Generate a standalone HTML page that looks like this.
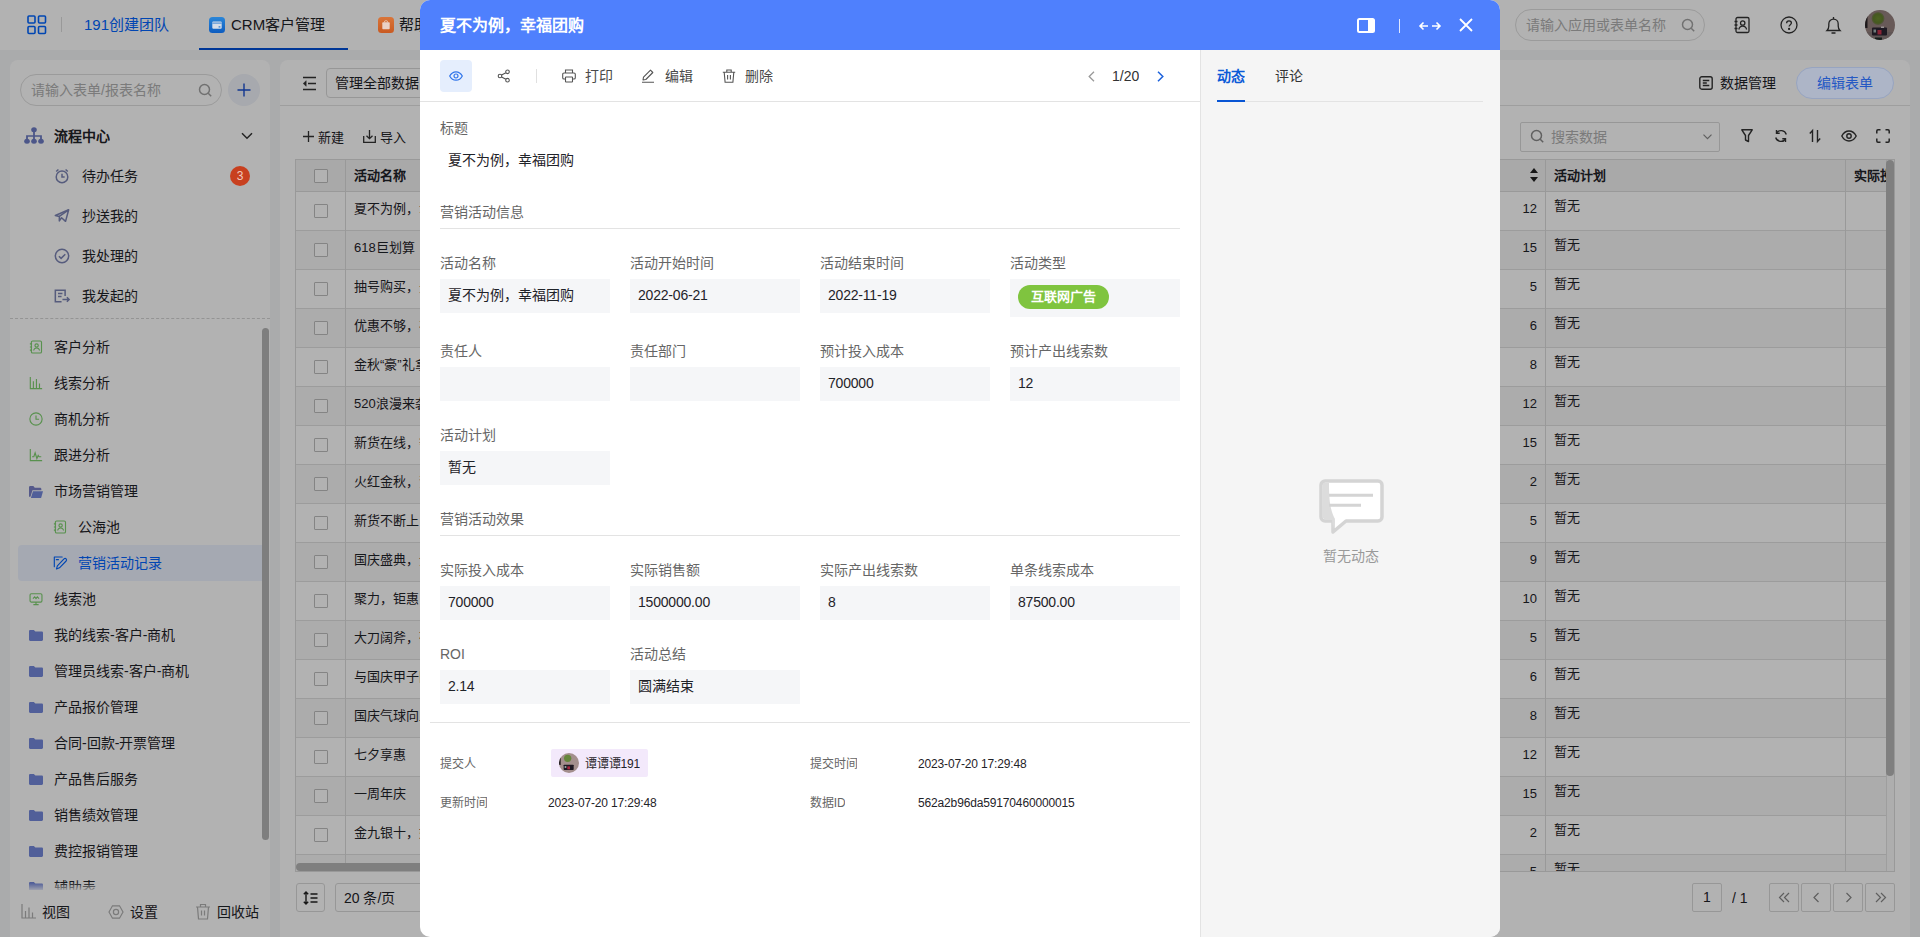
<!DOCTYPE html>
<html lang="zh-CN">
<head>
<meta charset="utf-8">
<title>CRM客户管理</title>
<style>
*{box-sizing:border-box;margin:0;padding:0}
html,body{width:1920px;height:937px;overflow:hidden;background:#f4f5f7}
body{font-family:"Liberation Sans",sans-serif;font-size:14px;color:#1f2329;position:relative;font-weight:300}
.a{position:absolute}
.t{position:absolute;white-space:nowrap;line-height:20px;font-size:14px;overflow:hidden}
svg{position:absolute;overflow:visible}
.b{font-weight:bold}
/* ---------- base page ---------- */
#top{left:0;top:0;width:1920px;height:50px;background:#fff}
#side{left:10px;top:60px;width:260px;height:900px;background:#fff;border-radius:8px}
#main{left:280px;top:60px;width:1630px;height:900px;background:#fff;border-radius:8px}
#mask{left:0;top:0;width:1920px;height:937px;background:rgba(0,0,0,.3)}
.nav{left:54px;color:#1f2329}
.nav2{left:82px;color:#1f2329}
/* table */
.row{position:absolute;left:296px;width:1598px;height:39px;border-bottom:1px solid #e0e0e0;background:#fff}
.row.e{background:#f7f7f7}
.cb{position:absolute;left:18px;top:12px;width:14px;height:14px;border:1px solid #bdbdbd;border-radius:1px;background:#fff}
.c1{position:absolute;left:58px;top:7px;line-height:20px;white-space:nowrap}
.cn{position:absolute;left:1180px;width:61px;top:7px;line-height:20px;text-align:right}
.cp{position:absolute;left:1258px;top:4px;line-height:20px;white-space:nowrap}
.vl{position:absolute;top:0;width:1px;height:39px;background:#dcdcdc}
/* ---------- modal ---------- */
#modal{left:420px;top:0;width:1080px;height:937px;background:#fff;border-radius:10px;overflow:hidden}
#mh{left:0;top:0;width:1080px;height:50px;background:#4f80fd}
#mr{left:780px;top:50px;width:300px;height:887px;background:#f5f5f5;border-left:1px solid #e3e3e3}
.fd{position:absolute;width:170px;height:34px;background:#f5f6f8;line-height:33px;padding-left:8px;white-space:nowrap;overflow:hidden;color:#1f2329}
.s12{font-size:12px;letter-spacing:-.15px}
.n{letter-spacing:-.2px}
</style>
</head>
<body>
<!-- ================= BASE PAGE ================= -->
<div id="top" class="a"></div>
<div id="side" class="a"></div>
<div id="main" class="a"></div>
<!-- topbar -->
<svg style="left:27px;top:15px" width="20" height="20" viewBox="0 0 20 20" fill="none" stroke="#0265ff" stroke-width="1.6"><rect x="1" y="1" width="7" height="7" rx="1"/><rect x="11.5" y="1" width="7" height="7" rx="1"/><rect x="1" y="11.5" width="7" height="7" rx="1"/><rect x="11.5" y="11.5" width="7" height="7" rx="1"/></svg>
<div class="a" style="left:61px;top:17px;width:1px;height:15px;background:#dcdcdc"></div>
<div class="t" style="left:84px;top:15px;font-size:15px;color:#0265ff">191创建团队</div>
<div class="t" style="left:231px;top:15px;font-size:15px;color:#1f2329">CRM客户管理</div>
<div class="a" style="left:199px;top:47.500px;width:149px;height:2.500px;background:#0050d8"></div>
<div class="t" style="left:399px;top:15px;font-size:15px;color:#1f2329">帮助中心</div>
<div class="a" style="left:1515px;top:9px;width:190px;height:32px;border:1px solid #dedede;border-radius:16px"></div>
<div class="t" style="left:1526px;top:15px;color:#b0b0b0">请输入应用或表单名称</div>
<svg style="left:1681px;top:18px" width="15" height="15" viewBox="0 0 15 15" fill="none" stroke="#a3a3a3" stroke-width="1.5"><circle cx="6.5" cy="6.5" r="5"/><path d="M10.2 10.2l3 3"/></svg>
<svg style="left:1733px;top:16px" width="18" height="18" viewBox="0 0 18 18" fill="none" stroke="#333" stroke-width="1.3"><rect x="3" y="1.5" width="13" height="15" rx="1.5"/><path d="M1.5 5.5h3M1.5 9h3M1.5 12.5h3"/><circle cx="9.7" cy="7" r="2.2"/><path d="M5.8 13.5c.5-2.3 2-3.3 3.9-3.3s3.4 1 3.9 3.3"/></svg>
<svg style="left:1780px;top:16px" width="18" height="18" viewBox="0 0 18 18" fill="none" stroke="#333" stroke-width="1.3"><circle cx="9" cy="9" r="8"/><path d="M6.6 7.2c0-1.4 1-2.4 2.4-2.4s2.4 1 2.4 2.2c0 1.6-2.3 1.8-2.3 3.6"/><circle cx="9.1" cy="12.9" r=".5" fill="#333"/></svg>
<svg style="left:1825px;top:16px" width="17" height="19" viewBox="0 0 17 19" fill="none" stroke="#333" stroke-width="1.3"><path d="M2 14.5h13c-1.3-1.2-1.8-2.5-1.8-4.5V8c0-2.8-2-4.8-4.7-4.8S3.800 5.200 3.800 8v2c0 2-.5 3.300-1.800 4.500z"/><path d="M8.500 1v2M6.500 17h4"/></svg>
<svg style="left:1865px;top:10px" width="30" height="30" viewBox="0 0 30 30"><defs><clipPath id="av"><circle cx="15" cy="15" r="15"/></clipPath><radialGradient id="gr"><stop offset="0" stop-color="#6f9030"/><stop offset=".7" stop-color="#64802f"/><stop offset="1" stop-color="#7d7a5c"/></radialGradient></defs><g clip-path="url(#av)"><rect width="30" height="30" fill="#96827f"/><rect x="0" y="22" width="30" height="8" fill="#8a7a7a"/><circle cx="13" cy="8.500" r="6.500" fill="url(#gr)"/><rect x="0" y="6" width="2.500" height="12" fill="#2a2428"/><rect x="7" y="17.500" width="15" height="8" rx="1" fill="#2b2431"/><rect x="12.500" y="20" width="4" height="4.500" fill="#c8344e"/><rect x="8.500" y="19.500" width="2.500" height="3" fill="#9fb0b0"/><rect x="16" y="16.500" width="3" height="1.500" fill="#d8d0d0"/><rect x="10" y="27.500" width="7" height="2.500" fill="#1f2a28"/></g></svg>
<!-- sidebar -->
<div class="a" style="left:20px;top:74px;width:202px;height:32px;border:1px solid #dedede;border-radius:16px"></div>
<div class="t" style="left:31px;top:80px;color:#b0b0b0">请输入表单/报表名称</div>
<svg style="left:198px;top:83px" width="15" height="15" viewBox="0 0 15 15" fill="none" stroke="#a3a3a3" stroke-width="1.5"><circle cx="6.5" cy="6.5" r="5"/><path d="M10.2 10.2l3 3"/></svg>
<div class="a" style="left:228px;top:74px;width:32px;height:32px;border-radius:16px;background:#eff2f9"></div>
<svg style="left:236px;top:82px" width="16" height="16" viewBox="0 0 16 16" fill="none" stroke="#1a4fd0" stroke-width="1.400"><path d="M8 1.500v13M1.500 8h13"/></svg>
<svg style="left:24px;top:127px" width="20" height="17" viewBox="0 0 20 19" preserveAspectRatio="none" fill="#6d7cc4" stroke="#6d7cc4"><circle cx="10" cy="3.200" r="2.800" stroke="none"/><circle cx="3" cy="15.800" r="2.800" stroke="none"/><circle cx="10" cy="15.800" r="2.800" stroke="none"/><circle cx="17" cy="15.800" r="2.800" stroke="none"/><path d="M10 5v9M3 14v-4h14v4" fill="none" stroke-width="1.800"/></svg>
<div class="t b" style="left:54px;top:126px;color:#1f2329">流程中心</div>
<svg style="left:241px;top:132px" width="12" height="8" viewBox="0 0 12 8" fill="none" stroke="#333" stroke-width="1.5"><path d="M1 1.200l5 5 5-5"/></svg>
<svg style="left:54px;top:168px" width="16" height="16" viewBox="0 0 18 18" fill="none" stroke="#7c84b4" stroke-width="1.700"><circle cx="9" cy="10" r="6.500"/><path d="M9 6.500V10h3M2.500 4l2.500-2.300M15.500 4L13 1.700"/></svg>
<div class="t nav2" style="top:166px">待办任务</div>
<svg style="left:54px;top:208px" width="16" height="16" viewBox="0 0 18 18" fill="none" stroke="#7c84b4" stroke-width="1.700" stroke-linejoin="round"><path d="M1.500 8.500L16.500 2l-3.500 13-4.500-4-2.500 3.500v-5z"/><path d="M6 9.500l10.500-7.500"/></svg>
<div class="t nav2" style="top:206px">抄送我的</div>
<svg style="left:54px;top:248px" width="16" height="16" viewBox="0 0 18 18" fill="none" stroke="#7c84b4" stroke-width="1.700"><circle cx="9" cy="9" r="7.500"/><path d="M5.500 9.200l2.500 2.500 4.700-4.700"/></svg>
<div class="t nav2" style="top:246px">我处理的</div>
<svg style="left:54px;top:288px" width="16" height="16" viewBox="0 0 18 18" fill="none" stroke="#7c84b4" stroke-width="1.700"><path d="M12.500 9V2.500h-11v13h7"/><path d="M4.500 6.200h5M4.500 9.500h4M9.500 13h7.500M14.500 10.500L17 13l-2.500 2.500"/></svg>
<div class="t nav2" style="top:286px">我发起的</div>
<div class="a" style="left:10px;top:318px;width:260px;height:0;border-top:1px dashed #d4d4d4"></div>
<svg style="left:29px;top:340px" width="14" height="14" viewBox="0 0 16 16" fill="none" stroke="#7fd070" stroke-width="1.300"><rect x="2.700" y="1.200" width="11.600" height="13.600" rx="1.500"/><path d="M1 4.500h2.500M1 8h2.500M1 11.500h2.500"/><circle cx="8.700" cy="6.300" r="1.900"/><path d="M5.300 12c.4-2 1.700-2.900 3.400-2.900s3 .9 3.400 2.900"/></svg>
<div class="t" style="left:54px;top:337px;color:#1f2329">客户分析</div>
<svg style="left:29px;top:376px" width="14" height="14" viewBox="0 0 16 16" fill="none" stroke="#7fd070" stroke-width="1.300"><path d="M1.500 1v13.500H15M5 14V6M8.500 14V3.500M12 14V8.500"/></svg>
<div class="t" style="left:54px;top:373px;color:#1f2329">线索分析</div>
<svg style="left:29px;top:412px" width="14" height="14" viewBox="0 0 16 16" fill="none" stroke="#7fd070" stroke-width="1.300"><circle cx="8" cy="8" r="7"/><path d="M8 4v4.300h3.500"/></svg>
<div class="t" style="left:54px;top:409px;color:#1f2329">商机分析</div>
<svg style="left:29px;top:448px" width="14" height="14" viewBox="0 0 16 16" fill="none" stroke="#7fd070" stroke-width="1.300"><path d="M1.500 1v13.500H15"/><path d="M3.500 10h2l1.500-4.500 2 6.500 1.500-3.500 1 1.500h2.500"/></svg>
<div class="t" style="left:54px;top:445px;color:#1f2329">跟进分析</div>
<svg style="left:29px;top:486px" width="14" height="12" viewBox="0 0 17 14" preserveAspectRatio="none" fill="#7488dc"><path fill="#7a80c6" d="M0 1.500C0 .700.700 0 1.500 0h3.800l1.700 2h6.500c.8 0 1.500.700 1.500 1.500V5H4.200L1.800 12.500 0 12.500z"/><path d="M4.800 6H17l-2.300 8H2.300z"/></svg>
<div class="t" style="left:54px;top:481px;color:#1f2329">市场营销管理</div>
<svg style="left:53px;top:520px" width="14" height="14" viewBox="0 0 16 16" fill="none" stroke="#7fd070" stroke-width="1.300"><rect x="2.700" y="1.200" width="11.600" height="13.600" rx="1.500"/><path d="M1 4.500h2.500M1 8h2.500M1 11.500h2.500"/><circle cx="8.700" cy="6.300" r="1.900"/><path d="M5.300 12c.4-2 1.700-2.900 3.400-2.900s3 .9 3.400 2.900"/></svg>
<div class="t" style="left:78px;top:517px;color:#1f2329">公海池</div>
<div class="a" style="left:18px;top:545px;width:244px;height:36px;background:#edf2ff;border-radius:4px 0 0 4px"></div>
<svg style="left:53px;top:556px" width="14" height="14" viewBox="0 0 16 16" fill="none" stroke="#0265ff" stroke-width="1.300" stroke-linejoin="round" stroke-linecap="round"><path d="M10.500 1.200H1.500v11"/><path d="M3.800 4.200h2.400"/><path d="M12.600 3.300c.7-.7 1.800-.7 2.400 0s.7 1.700 0 2.400L7.400 13.500l-3.400 1.300 1-3.600z"/></svg>
<div class="t" style="left:78px;top:553px;color:#0265ff">营销活动记录</div>
<svg style="left:29px;top:592px" width="14" height="14" viewBox="0 0 16 16" fill="none" stroke="#7fd070" stroke-width="1.300"><rect x="1.200" y="2" width="13.600" height="9.500" rx="1.500"/><path d="M5 14.500h6M8 11.500v3"/><path d="M4.500 7.500l2-2 1.500 2 1.500-2 2 2"/></svg>
<div class="t" style="left:54px;top:589px;color:#1f2329">线索池</div>
<svg style="left:29px;top:630px" width="14" height="11" viewBox="0 0 16 14" preserveAspectRatio="none" fill="#7488dc"><path d="M0 1.500C0 .700.700 0 1.500 0h4l1.800 2h7.200c.8 0 1.500.700 1.500 1.500v9c0 .800-.700 1.500-1.500 1.500h-13C.700 14 0 13.300 0 12.500z"/></svg>
<div class="t" style="left:54px;top:625px;color:#1f2329">我的线索-客户-商机</div>
<svg style="left:29px;top:666px" width="14" height="11" viewBox="0 0 16 14" preserveAspectRatio="none" fill="#7488dc"><path d="M0 1.500C0 .700.700 0 1.500 0h4l1.800 2h7.200c.8 0 1.500.700 1.500 1.500v9c0 .800-.700 1.500-1.500 1.500h-13C.700 14 0 13.300 0 12.500z"/></svg>
<div class="t" style="left:54px;top:661px;color:#1f2329">管理员线索-客户-商机</div>
<svg style="left:29px;top:702px" width="14" height="11" viewBox="0 0 16 14" preserveAspectRatio="none" fill="#7488dc"><path d="M0 1.500C0 .700.700 0 1.500 0h4l1.800 2h7.200c.8 0 1.500.700 1.500 1.500v9c0 .800-.700 1.500-1.500 1.500h-13C.700 14 0 13.300 0 12.500z"/></svg>
<div class="t" style="left:54px;top:697px;color:#1f2329">产品报价管理</div>
<svg style="left:29px;top:738px" width="14" height="11" viewBox="0 0 16 14" preserveAspectRatio="none" fill="#7488dc"><path d="M0 1.500C0 .700.700 0 1.500 0h4l1.800 2h7.200c.8 0 1.500.700 1.500 1.500v9c0 .800-.700 1.500-1.500 1.500h-13C.700 14 0 13.300 0 12.500z"/></svg>
<div class="t" style="left:54px;top:733px;color:#1f2329">合同-回款-开票管理</div>
<svg style="left:29px;top:774px" width="14" height="11" viewBox="0 0 16 14" preserveAspectRatio="none" fill="#7488dc"><path d="M0 1.500C0 .700.700 0 1.500 0h4l1.800 2h7.200c.8 0 1.500.700 1.500 1.500v9c0 .800-.700 1.500-1.500 1.500h-13C.700 14 0 13.300 0 12.500z"/></svg>
<div class="t" style="left:54px;top:769px;color:#1f2329">产品售后服务</div>
<svg style="left:29px;top:810px" width="14" height="11" viewBox="0 0 16 14" preserveAspectRatio="none" fill="#7488dc"><path d="M0 1.500C0 .700.700 0 1.500 0h4l1.800 2h7.200c.8 0 1.500.700 1.500 1.500v9c0 .800-.700 1.500-1.500 1.500h-13C.700 14 0 13.300 0 12.500z"/></svg>
<div class="t" style="left:54px;top:805px;color:#1f2329">销售绩效管理</div>
<svg style="left:29px;top:846px" width="14" height="11" viewBox="0 0 16 14" preserveAspectRatio="none" fill="#7488dc"><path d="M0 1.500C0 .700.700 0 1.500 0h4l1.800 2h7.200c.8 0 1.500.700 1.500 1.500v9c0 .800-.700 1.500-1.500 1.500h-13C.700 14 0 13.300 0 12.500z"/></svg>
<div class="t" style="left:54px;top:841px;color:#1f2329">费控报销管理</div>
<svg style="left:29px;top:882px" width="14" height="11" viewBox="0 0 16 14" preserveAspectRatio="none" fill="#7488dc"><path d="M0 1.500C0 .700.700 0 1.500 0h4l1.800 2h7.200c.8 0 1.500.700 1.500 1.500v9c0 .800-.700 1.500-1.500 1.500h-13C.700 14 0 13.300 0 12.500z"/></svg>
<div class="t" style="left:54px;top:877px;color:#1f2329">辅助表</div>
<div class="a" style="left:262px;top:328px;width:7px;height:512px;border-radius:4px;background:#b5b5b5"></div>
<div class="a" style="left:10px;top:883px;width:252px;height:7px;background:linear-gradient(rgba(255,255,255,0),rgba(255,255,255,.8))"></div>
<div class="a" style="left:10px;top:890px;width:260px;height:47px;background:#fff"></div>
<svg style="left:21px;top:904px" width="15" height="15" viewBox="0 0 15 15" fill="none" stroke="#b0b0b0" stroke-width="1.200"><path d="M1 0v14h14M4.500 14V7M8 14V3.500M11.500 14V8.500"/></svg>
<div class="t" style="left:42px;top:902px">视图</div>
<svg style="left:108px;top:904px" width="16" height="16" viewBox="0 0 16 16" fill="none" stroke="#b0b0b0" stroke-width="1.200"><path d="M1 8l3.500-6.200h7L15 8l-3.500 6.200h-7z"/><circle cx="8" cy="8" r="2.600"/></svg>
<div class="t" style="left:130px;top:902px">设置</div>
<svg style="left:195px;top:903px" width="16" height="17" viewBox="0 0 16 17" fill="none" stroke="#b0b0b0" stroke-width="1.200"><path d="M1 4h14M5.500 4V1.500h5V4M2.500 4l1 12h9l1-12M6.500 7.500v5M9.500 7.500v5"/></svg>
<div class="t" style="left:217px;top:902px">回收站</div>
<!-- main -->
<svg style="left:302px;top:76px" width="15" height="15" viewBox="0 0 15 15" fill="none" stroke="#333" stroke-width="1.500"><path d="M1 1.500h13M6 7.500h8M1 13.500h13"/><path d="M4.200 4.700L1.200 7.500l3 2.800z" fill="#333" stroke-width=".5"/></svg>
<div class="a" style="left:326px;top:68px;width:200px;height:30px;border:1px solid #d9d9d9;border-radius:4px"></div>
<div class="t" style="left:335px;top:73px">管理全部数据</div>
<svg style="left:1699px;top:76px" width="14" height="14" viewBox="0 0 14 14" fill="none" stroke="#333" stroke-width="1.400"><rect x=".8" y=".8" width="12.400" height="12.400" rx="2"/><path d="M3.800 4.500h6.500M3.800 7h4M3.800 9.500h6.500"/></svg>
<div class="t" style="left:1720px;top:73px">数据管理</div>
<div class="a" style="left:280px;top:105px;width:1630px;height:1px;background:#e3e3e3"></div>
<svg style="left:303px;top:131px" width="11" height="11" viewBox="0 0 11 11" fill="none" stroke="#333" stroke-width="1.300"><path d="M5.500 0v11M0 5.500h11"/></svg>
<div class="t" style="left:318px;top:128px;font-size:13px">新建</div>
<svg style="left:363px;top:130px" width="13" height="13" viewBox="0 0 13 13" fill="none" stroke="#333" stroke-width="1.300"><path d="M.7 6v6.300h11.600V6M6.500 0v8.500M3.500 5.700l3 3 3-3"/></svg>
<div class="t" style="left:380px;top:128px;font-size:13px">导入</div>
<div class="a" style="left:1520px;top:122px;width:200px;height:30px;border:1px solid #d9d9d9;border-radius:2px"></div>
<svg style="left:1530px;top:129px" width="15" height="15" viewBox="0 0 15 15" fill="none" stroke="#8a8a8a" stroke-width="1.500"><circle cx="6.500" cy="6.500" r="5"/><path d="M10.200 10.200l3 3"/></svg>
<div class="t" style="left:1551px;top:127px;color:#b0b0b0">搜索数据</div>
<svg style="left:1703px;top:134px" width="9" height="6" viewBox="0 0 9 6" fill="none" stroke="#8a8a8a" stroke-width="1.200"><path d="M.5.700l4 4 4-4"/></svg>
<svg style="left:1741px;top:129px" width="12" height="14" viewBox="0 0 12 14" fill="none" stroke="#333" stroke-width="1.400" stroke-linejoin="round"><path d="M.8.800h10.400L7.500 6.500v6l-3-1.500v-4.500z"/></svg>
<svg style="left:1774px;top:129px" width="14" height="14" viewBox="0 0 14 14" fill="none" stroke="#333" stroke-width="1.400"><path d="M12.300 5.500A5.500 5.500 0 0 0 2.500 4M1.700 8.500a5.500 5.500 0 0 0 9.800 1.500"/><path d="M2.500 1v3.200h3.200M11.500 13V9.800H8.300" fill="none"/></svg>
<svg style="left:1809px;top:129px" width="12" height="14" viewBox="0 0 12 14" fill="none" stroke="#333" stroke-width="1.400"><path d="M3.500 13V1.500L.8 4.500M8.500 1v11.500l2.700-3"/></svg>
<svg style="left:1841px;top:130px" width="16" height="12" viewBox="0 0 16 12" fill="none" stroke="#333" stroke-width="1.400"><path d="M.8 6C2.500 2.800 5 1 8 1s5.500 1.800 7.200 5C13.500 9.200 11 11 8 11S2.500 9.200.8 6z"/><circle cx="8" cy="6" r="2.200"/></svg>
<svg style="left:1876px;top:129px" width="14" height="14" viewBox="0 0 14 14" fill="none" stroke="#333" stroke-width="1.500"><path d="M.8 4.500V2c0-.7.500-1.200 1.200-1.200h2.500M9.500.8H12c.7 0 1.200.500 1.200 1.200v2.500M13.200 9.500V12c0 .7-.5 1.200-1.200 1.200H9.500M4.500 13.200H2c-.7 0-1.200-.5-1.200-1.200V9.500"/></svg>
<div class="a" style="left:295px;top:159px;width:1600px;height:713px;border:1px solid #dcdcdc;background:#fff"></div>
<div class="a" style="left:296px;top:160px;width:1598px;height:711px;overflow:hidden;font-size:13px">
<div class="a" style="left:0;top:0;width:1598px;height:32px;background:#f2f2f2;border-bottom:1px solid #dcdcdc"></div>
<div class="cb" style="top:9px"></div>
<div class="t b" style="left:58px;top:6px;font-size:13px">活动名称</div>
<div class="t b" style="left:1258px;top:6px;font-size:13px">活动计划</div>
<div class="t b" style="left:1558px;top:6px;font-size:13px">实际投入成本</div>
<svg style="left:1234px;top:8px" width="8" height="14" viewBox="0 0 8 14" fill="#222"><path d="M4 0l4 5H0zM4 14l4-5H0z"/></svg>
<div class="row" style="left:0;top:32px"><div class="cb"></div><div class="c1">夏不为例，幸福团购</div><div class="cn">12</div><div class="cp">暂无</div></div>
<div class="row e" style="left:0;top:71px"><div class="cb"></div><div class="c1">618巨划算</div><div class="cn">15</div><div class="cp">暂无</div></div>
<div class="row" style="left:0;top:110px"><div class="cb"></div><div class="c1">抽号购买，先到先得</div><div class="cn">5</div><div class="cp">暂无</div></div>
<div class="row e" style="left:0;top:149px"><div class="cb"></div><div class="c1">优惠不够，礼品来凑</div><div class="cn">6</div><div class="cp">暂无</div></div>
<div class="row" style="left:0;top:188px"><div class="cb"></div><div class="c1">金秋“豪”礼拿不停</div><div class="cn">8</div><div class="cp">暂无</div></div>
<div class="row e" style="left:0;top:227px"><div class="cb"></div><div class="c1">520浪漫来袭</div><div class="cn">12</div><div class="cp">暂无</div></div>
<div class="row" style="left:0;top:266px"><div class="cb"></div><div class="c1">新货在线，等你来战</div><div class="cn">15</div><div class="cp">暂无</div></div>
<div class="row e" style="left:0;top:305px"><div class="cb"></div><div class="c1">火红金秋，贺中秋</div><div class="cn">2</div><div class="cp">暂无</div></div>
<div class="row" style="left:0;top:344px"><div class="cb"></div><div class="c1">新货不断上</div><div class="cn">5</div><div class="cp">暂无</div></div>
<div class="row e" style="left:0;top:383px"><div class="cb"></div><div class="c1">国庆盛典，全城疯抢</div><div class="cn">9</div><div class="cp">暂无</div></div>
<div class="row" style="left:0;top:422px"><div class="cb"></div><div class="c1">聚力，钜惠</div><div class="cn">10</div><div class="cp">暂无</div></div>
<div class="row e" style="left:0;top:461px"><div class="cb"></div><div class="c1">大刀阔斧，砍价到底</div><div class="cn">5</div><div class="cp">暂无</div></div>
<div class="row" style="left:0;top:500px"><div class="cb"></div><div class="c1">与国庆甲子同庆</div><div class="cn">6</div><div class="cp">暂无</div></div>
<div class="row e" style="left:0;top:539px"><div class="cb"></div><div class="c1">国庆气球向上飘</div><div class="cn">8</div><div class="cp">暂无</div></div>
<div class="row" style="left:0;top:578px"><div class="cb"></div><div class="c1">七夕享惠</div><div class="cn">12</div><div class="cp">暂无</div></div>
<div class="row e" style="left:0;top:617px"><div class="cb"></div><div class="c1">一周年庆</div><div class="cn">15</div><div class="cp">暂无</div></div>
<div class="row" style="left:0;top:656px"><div class="cb"></div><div class="c1">金九银十，好礼相送</div><div class="cn">2</div><div class="cp">暂无</div></div>
<div class="row e" style="left:0;top:695px"><div class="cb"></div><div class="c1">年终大促</div><div class="cn">5</div><div class="cp">暂无</div></div>
<div class="a" style="left:49px;top:0;width:1px;height:711px;background:#dcdcdc"></div>
<div class="a" style="left:1249px;top:0;width:1px;height:711px;background:#dcdcdc"></div>
<div class="a" style="left:1549px;top:0;width:1px;height:711px;background:#dcdcdc"></div>
<div class="a" style="left:1590px;top:0;width:8px;height:711px;background:#fafafa;border-left:1px solid #e3e3e3"></div>
<div class="a" style="left:1590px;top:0;width:8px;height:616px;border-radius:4px;background:#b7b7b7"></div>
</div>
<div class="a" style="left:296px;top:863px;width:860px;height:8px;border-radius:4px;background:#b7b7b7"></div>
<div class="a" style="left:296px;top:883px;width:29px;height:29px;border:1px solid #d9d9d9;border-radius:3px"></div>
<svg style="left:303px;top:891px" width="15" height="14" viewBox="0 0 15 14" fill="none" stroke="#222" stroke-width="1.400"><path d="M3 1v12M.8 3.200L3 1l2.200 2.200M.8 10.800L3 13l2.200-2.200M7.500 3h7M7.500 7h7M7.500 11h7"/></svg>
<div class="a" style="left:335px;top:883px;width:120px;height:29px;border:1px solid #d9d9d9;border-radius:3px"></div>
<div class="t" style="left:344px;top:888px">20 条/页</div>
<div class="a" style="left:1692px;top:883px;width:30px;height:29px;border:1px solid #d9d9d9;border-radius:2px;text-align:center;line-height:27px">1</div>
<div class="t" style="left:1732px;top:888px">/ 1</div>
<div class="a" style="left:1769px;top:883px;width:30px;height:29px;border:1px solid #d9d9d9;border-radius:2px"><svg style="left:6px;top:5px" width="17" height="17" viewBox="0 0 17 17" fill="none" stroke="#888" stroke-width="1.200"><path d="M8 4L3.500 8.500 8 13M13 4L8.500 8.500 13 13"/></svg></div>
<div class="a" style="left:1801px;top:883px;width:30px;height:29px;border:1px solid #d9d9d9;border-radius:2px"><svg style="left:6px;top:5px" width="17" height="17" viewBox="0 0 17 17" fill="none" stroke="#888" stroke-width="1.200"><path d="M10.500 4L6 8.500l4.500 4.500"/></svg></div>
<div class="a" style="left:1833px;top:883px;width:30px;height:29px;border:1px solid #d9d9d9;border-radius:2px"><svg style="left:6px;top:5px" width="17" height="17" viewBox="0 0 17 17" fill="none" stroke="#888" stroke-width="1.200"><path d="M6.500 4L11 8.500 6.500 13"/></svg></div>
<div class="a" style="left:1865px;top:883px;width:30px;height:29px;border:1px solid #d9d9d9;border-radius:2px"><svg style="left:6px;top:5px" width="17" height="17" viewBox="0 0 17 17" fill="none" stroke="#888" stroke-width="1.200"><path d="M4 4l4.500 4.500L4 13M9 4l4.500 4.500L9 13"/></svg></div>
<div id="mask" class="a"></div>
<div class="a" style="left:230px;top:166px;width:20px;height:20px;border-radius:10px;background:#c8401f;color:#f2c9bd;font-size:12px;line-height:20px;text-align:center">3</div>
<div class="a" style="left:1796px;top:67px;width:98px;height:32px;border:1px solid #97a4c0;border-radius:16px;background:#adb5c7;color:#2458c4;line-height:30px;text-align:center;font-size:14px">编辑表单</div>
<svg style="left:209px;top:17px" width="16" height="16" viewBox="0 0 16 16"><defs><linearGradient id="tb" x1="0" y1="0" x2="0" y2="1"><stop offset="0" stop-color="#2a86d8"/><stop offset="1" stop-color="#0d5cc0"/></linearGradient><linearGradient id="to" x1="0" y1="0" x2="0" y2="1"><stop offset="0" stop-color="#d9753a"/><stop offset="1" stop-color="#c95a22"/></linearGradient></defs><rect width="16" height="16" rx="3.500" fill="url(#tb)"/><rect x="3.300" y="4.500" width="9.400" height="7.200" rx="1" fill="#d5dde8"/><rect x="3.300" y="5.600" width="9.400" height="1" fill="#3f86d2"/><rect x="9.600" y="9.300" width="1.800" height="1.200" fill="#2f78c8"/></svg>
<svg style="left:378px;top:17px" width="16" height="16" viewBox="0 0 16 16"><rect width="16" height="16" rx="3.500" fill="url(#to)"/><path d="M4.300 6.200c0-.6.400-1 1-1h5.400c.6 0 1 .4 1 1v5c0 .6-.4 1-1 1H5.300c-.6 0-1-.4-1-1z" fill="#ead2c8"/><path d="M6.500 5.200V4.600c0-.5.300-.8.800-.8h1.400c.5 0 .8.300.8.800v.6" fill="none" stroke="#ead2c8" stroke-width=".9"/></svg>

<!-- ================= MODAL ================= -->
<div id="modal" class="a">
<div id="mh" class="a"></div>
<div id="mr" class="a"></div>
<div class="t b" style="left:20px;top:16px;font-size:16px;color:#fff">夏不为例，幸福团购</div>
<svg style="left:937px;top:18px" width="18" height="15" viewBox="0 0 18 15"><rect x="1" y="1" width="16" height="13" rx="1.500" fill="none" stroke="#fff" stroke-width="2"/><rect x="11" y="1" width="6" height="13" fill="#fff"/></svg>
<div class="a" style="left:979px;top:19px;width:1px;height:14px;background:#dfe8ff"></div>
<svg style="left:999px;top:21px" width="22" height="10" viewBox="0 0 22 10" fill="none" stroke="#fff" stroke-width="1.600"><path d="M1 5h8M4.500 1.500L1 5l3.500 3.500M13 5h8M17.500 1.500L21 5l-3.500 3.500"/></svg>
<svg style="left:1039px;top:18px" width="14" height="14" viewBox="0 0 14 14" fill="none" stroke="#fff" stroke-width="1.800"><path d="M1 1l12 12M13 1L1 13"/></svg>
<div class="a" style="left:20px;top:60px;width:32px;height:32px;border-radius:4px;background:#e5eefd"></div>
<svg style="left:29px;top:71px" width="14" height="10" viewBox="0 0 14 10" fill="none" stroke="#2f74ea" stroke-width="1.200"><path d="M.7 5C2.200 2.200 4.500.8 7 .8s4.800 1.400 6.300 4.200C11.800 7.800 9.500 9.200 7 9.200S2.200 7.800.7 5z"/><circle cx="7" cy="5" r="2"/></svg>
<svg style="left:77px;top:69px" width="14" height="14" viewBox="0 0 14 14" fill="none" stroke="#555" stroke-width="1.100"><circle cx="10.500" cy="2.800" r="1.800"/><circle cx="3" cy="7" r="1.800"/><circle cx="10.500" cy="11.200" r="1.800"/><path d="M4.600 6.100l4.300-2.400M4.600 7.900l4.300 2.400"/></svg>
<div class="a" style="left:116px;top:69px;width:1px;height:14px;background:#e0e0e0"></div>
<svg style="left:142px;top:69px" width="14" height="14" viewBox="0 0 14 14" fill="none" stroke="#555" stroke-width="1.100"><path d="M3.500 4V1h7v3M3.500 10H2c-.8 0-1.300-.5-1.300-1.300V5.300C.7 4.500 1.200 4 2 4h10c.8 0 1.300.5 1.300 1.300v3.400c0 .8-.5 1.300-1.300 1.300h-1.500"/><rect x="3.500" y="8" width="7" height="5" rx=".5"/></svg>
<div class="t" style="left:165px;top:66px;color:#4a4a4a">打印</div>
<svg style="left:221px;top:69px" width="14" height="14" viewBox="0 0 14 14" fill="none" stroke="#555" stroke-width="1.100" stroke-linejoin="round"><path d="M9.500 1.200l2.300 2.300-7 7-2.800.5.500-2.800zM1 13.200h12"/></svg>
<div class="t" style="left:245px;top:66px;color:#4a4a4a">编辑</div>
<svg style="left:302px;top:69px" width="14" height="14" viewBox="0 0 14 14" fill="none" stroke="#555" stroke-width="1.100"><path d="M.8 3.200h12.400M4.800 3.200V1h4.400v2.200M2.200 3.200l.9 10h7.800l.9-10M5.600 6v4.500M8.400 6v4.500"/></svg>
<div class="t" style="left:325px;top:66px;color:#4a4a4a">删除</div>
<svg style="left:668px;top:71px" width="7" height="11" viewBox="0 0 7 11" fill="none" stroke="#999" stroke-width="1.300"><path d="M6 .8L1.200 5.500 6 10.200"/></svg>
<div class="t" style="left:692px;top:66px;color:#333">1/20</div>
<svg style="left:737px;top:71px" width="7" height="11" viewBox="0 0 7 11" fill="none" stroke="#1c62dc" stroke-width="1.500"><path d="M1 .8l4.800 4.700L1 10.200"/></svg>
<div class="a" style="left:0;top:101px;width:780px;height:1px;background:#e3e3e3"></div>
<div class="t b" style="left:797px;top:66px;color:#0b5ad8">动态</div>
<div class="t" style="left:855px;top:66px;color:#333">评论</div>
<div class="a" style="left:797px;top:101px;width:266px;height:1px;background:#e3e3e3"></div>
<div class="a" style="left:797px;top:100px;width:28px;height:2px;background:#0855d4"></div>
<svg style="left:899px;top:479px" width="65" height="56" viewBox="0 0 65 56"><path d="M6 2h53c2.200 0 4 1.800 4 4v32c0 2.200-1.800 4-4 4H27L14 53V42H6c-2.200 0-4-1.800-4-4V6c0-2.200 1.800-4 4-4z" fill="#fff" stroke="#d4d4d4" stroke-width="3.500" stroke-linejoin="round"/><path d="M4 4h6c0 16 1 27 6 36l-2 11-1-10H6l-3-3z" fill="#dcdcdc"/><path d="M10 16.300h44M10 26.300h32" stroke="#d4d4d4" stroke-width="3"/></svg>
<div class="t" style="left:903px;top:546px;color:#999">暂无动态</div>
<div class="t" style="left:20px;top:118px;color:#666">标题</div>
<div class="t" style="left:28px;top:150px;color:#1f2329">夏不为例，幸福团购</div>
<div class="t" style="left:20px;top:202px;color:#666">营销活动信息</div>
<div class="a" style="left:20px;top:228px;width:740px;height:1px;background:#e3e3e3"></div>
<div class="t" style="left:20px;top:253px;color:#666">活动名称</div>
<div class="fd" style="left:20px;top:279px">夏不为例，幸福团购</div>
<div class="t" style="left:210px;top:253px;color:#666">活动开始时间</div>
<div class="fd n" style="left:210px;top:279px">2022-06-21</div>
<div class="t" style="left:400px;top:253px;color:#666">活动结束时间</div>
<div class="fd n" style="left:400px;top:279px">2022-11-19</div>
<div class="t" style="left:590px;top:253px;color:#666">活动类型</div>
<div class="fd" style="left:590px;top:279px;height:38px"></div>
<div class="a b" style="left:598px;top:285px;width:91px;height:24px;border-radius:12px;background:#7fc43f;color:#fff;font-size:13px;line-height:24px;text-align:center;white-space:nowrap">互联网广告</div>
<div class="t" style="left:20px;top:341px;color:#666">责任人</div>
<div class="fd" style="left:20px;top:367px"></div>
<div class="t" style="left:210px;top:341px;color:#666">责任部门</div>
<div class="fd" style="left:210px;top:367px"></div>
<div class="t" style="left:400px;top:341px;color:#666">预计投入成本</div>
<div class="fd n" style="left:400px;top:367px">700000</div>
<div class="t" style="left:590px;top:341px;color:#666">预计产出线索数</div>
<div class="fd n" style="left:590px;top:367px">12</div>
<div class="t" style="left:20px;top:425px;color:#666">活动计划</div>
<div class="fd" style="left:20px;top:451px">暂无</div>
<div class="t" style="left:20px;top:509px;color:#666">营销活动效果</div>
<div class="a" style="left:20px;top:535px;width:740px;height:1px;background:#e3e3e3"></div>
<div class="t" style="left:20px;top:560px;color:#666">实际投入成本</div>
<div class="fd n" style="left:20px;top:586px">700000</div>
<div class="t" style="left:210px;top:560px;color:#666">实际销售额</div>
<div class="fd n" style="left:210px;top:586px">1500000.00</div>
<div class="t" style="left:400px;top:560px;color:#666">实际产出线索数</div>
<div class="fd n" style="left:400px;top:586px">8</div>
<div class="t" style="left:590px;top:560px;color:#666">单条线索成本</div>
<div class="fd n" style="left:590px;top:586px">87500.00</div>
<div class="t" style="left:20px;top:644px;color:#666">ROI</div>
<div class="fd n" style="left:20px;top:670px">2.14</div>
<div class="t" style="left:210px;top:644px;color:#666">活动总结</div>
<div class="fd" style="left:210px;top:670px">圆满结束</div>
<div class="a" style="left:10px;top:722px;width:760px;height:1px;background:#e3e3e3"></div>
<div class="t s12" style="left:20px;top:754px;color:#666">提交人</div>
<div class="a" style="left:131px;top:749px;width:97px;height:28px;border-radius:2px;background:#f3e9fb"></div>
<svg style="left:139px;top:753px" width="20" height="20" viewBox="0 0 30 30"><defs><clipPath id="av2"><circle cx="15" cy="15" r="15"/></clipPath></defs><g clip-path="url(#av2)"><rect width="30" height="30" fill="#a38f8d"/><circle cx="13" cy="8" r="5.500" fill="#64863a"/><rect x="0" y="6" width="2.500" height="12" fill="#1d181b"/><rect x="7" y="17.500" width="15" height="8" rx="1" fill="#1e1822"/><rect x="12.500" y="20" width="4" height="4.500" fill="#a82840"/><rect x="8.500" y="19.500" width="2.500" height="3" fill="#8fa0a0"/></g></svg>
<div class="t s12" style="left:165px;top:754px;color:#1f2329">谭谭谭191</div>
<div class="t s12" style="left:390px;top:754px;color:#666">提交时间</div>
<div class="t s12" style="left:498px;top:754px;color:#1f2329">2023-07-20 17:29:48</div>
<div class="t s12" style="left:20px;top:793px;color:#666">更新时间</div>
<div class="t s12" style="left:128px;top:793px;color:#1f2329">2023-07-20 17:29:48</div>
<div class="t s12" style="left:390px;top:793px;color:#666">数据ID</div>
<div class="t s12" style="left:498px;top:793px;color:#1f2329">562a2b96da59170460000015</div>
</div>
</body>
</html>
